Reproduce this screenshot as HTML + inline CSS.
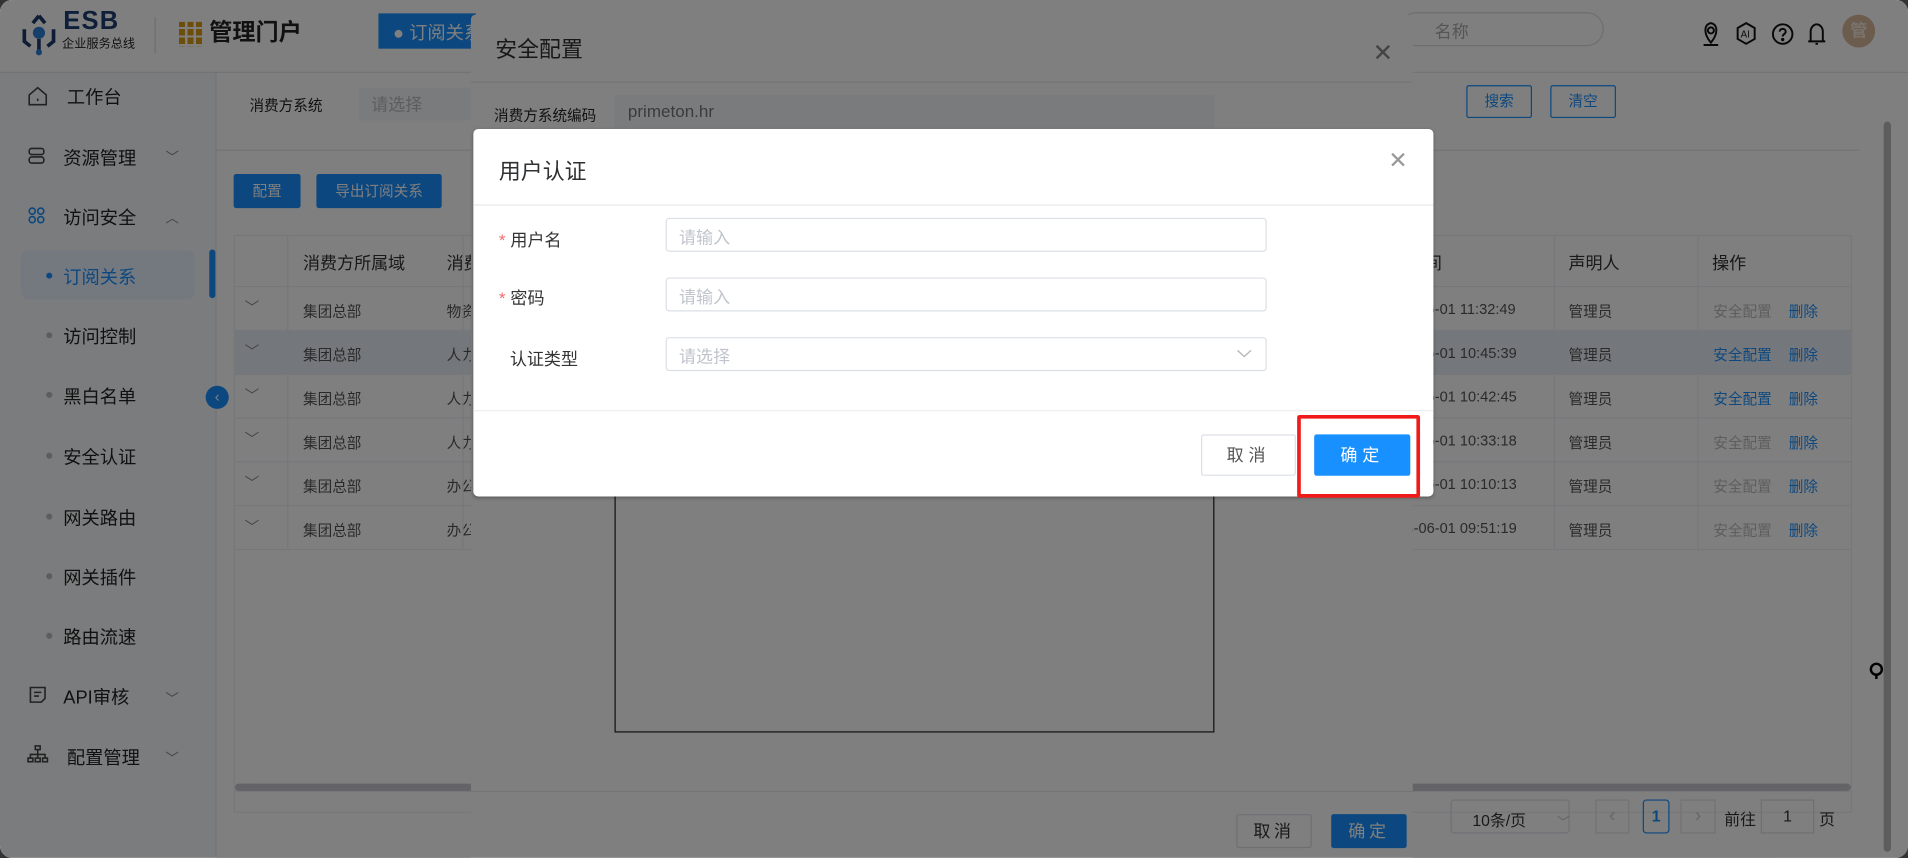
<!DOCTYPE html>
<html><head><meta charset="utf-8"><style>
*{box-sizing:border-box;margin:0;padding:0}
html,body{width:1908px;height:858px;overflow:hidden;background:#333}
#s{position:absolute;left:0;top:0;width:1568px;height:705px;transform:scale(1.21684);transform-origin:0 0;background:#fff;font-family:"Liberation Sans","Noto Sans CJK SC",sans-serif;color:#333;overflow:hidden;border-radius:10px}
.a{position:absolute;white-space:nowrap}
.hdr{left:0;top:0;width:1568px;height:60px;border-bottom:1px solid #e6e6e6;background:#fff}
.side{left:0;top:60px;width:178px;height:645px;background:#f7f8fa;border-right:1px solid #e8e8e8}
.mi{left:52px;font-size:15px;color:#222}
.dot{width:5px;height:5px;border-radius:50%;background:#bbb}
.btn{border-radius:2px;font-size:12px;text-align:center}
.tb{left:192px;top:193px;width:1330px;height:475px;border:1px solid #ebeef5}
.row{position:absolute;left:0;width:1328px;border-bottom:1px solid #ebeef5;font-size:12px;color:#555}
.vl{position:absolute;top:0;width:1px;background:#ebeef5}
.mask{left:0;top:0;width:1568px;height:705px;background:rgba(0,0,0,.5)}
.inp{border:1px solid #dcdfe6;border-radius:3px;height:28px;font-size:14px;color:#c0c4cc;padding:5px 10px}
.lbl{font-size:14px;color:#333}
.req{color:#f56c6c;margin-right:4px}
.chev{left:136px;font-size:11px;color:#888}
</style></head><body><div id="s">
<div class="a hdr"></div>
<svg class="a" style="left:15px;top:10px" width="34" height="36" viewBox="0 0 34 36"><circle cx="17" cy="17" r="5" fill="#2f7fd8"/><path d="M17 3 L12 9 M17 3 L22 9 M5 14 L5 24 L10 28 M29 14 L29 24 L24 28 M17 22 L17 33" stroke="#1d3b6b" stroke-width="3" fill="none"/><circle cx="17" cy="33" r="2.5" fill="#2f7fd8"/></svg>
<div class="a" style="left:52px;top:6px;font-size:21px;font-weight:bold;color:#1e3e73;letter-spacing:1px">ESB</div>
<div class="a" style="left:51px;top:27px;font-size:10px;color:#222">企业服务总线</div>
<div class="a" style="left:127px;top:14px;width:1px;height:30px;background:#ddd"></div>
<div class="a" style="left:147px;top:18px;width:20px;height:20px;background:repeating-linear-gradient(90deg,#d89a12 0 5px,transparent 5px 7px),#fff;"></div>
<div class="a" style="left:147px;top:18px;width:20px;height:20px;background:repeating-linear-gradient(0deg,#fff 0 2px,transparent 2px 7px)"></div>
<div class="a" style="left:172px;top:12px;font-size:19px;font-weight:bold;color:#222">管理门户</div>
<div class="a" style="left:311px;top:11px;width:80px;height:29px;background:#1890ff;color:#fff;font-size:15px;padding:5px 0 0 12px">● 订阅关系</div>
<div class="a" style="left:1150px;top:10px;width:168px;height:28px;border:1px solid #ddd;border-radius:14px;font-size:14px;color:#aaa;padding:5px 0 0 28px">名称</div>
<svg class="a" style="left:1396px;top:16px" width="110" height="24" viewBox="0 0 110 24" fill="none" stroke="#111" stroke-width="1.6"><path d="M10 19 C4 12 4 4 10 3 C16 4 16 12 10 19 Z M4 21 L16 21"/><circle cx="10" cy="9" r="2.5"/><path d="M39 3 L46 7 L46 16 L39 20 L32 16 L32 7 Z"/><text x="34.5" y="15" font-size="8" fill="#111" stroke="none" font-family="Liberation Sans">AI</text><circle cx="69" cy="12" r="8"/><path d="M66.5 10 C66.5 7 71.5 7 71.5 10 C71.5 12 69 12 69 14"/><circle cx="69" cy="16.5" r=".6" fill="#111"/><path d="M92 18 L92 10 C92 6 95 4 97 4 C99 4 102 6 102 10 L102 18 M90 18 L104 18 M96 20 L98 20"/></svg>
<div class="a" style="left:1514px;top:12px;width:27px;height:27px;border-radius:50%;background:#d9b99a;color:#f3e6da;font-size:14px;font-weight:bold;text-align:center;line-height:27px">管</div>
<div class="a side"></div>
<svg class="a" style="left:22px;top:70px" width="18" height="18" viewBox="0 0 18 18" fill="none" stroke="#444" stroke-width="1.3"><path d="M2 8 L9 2 L16 8 L16 16 L2 16 Z M9 11 L9 13"/></svg>
<div class="a mi" style="top:69px;left:55px">工作台</div>
<svg class="a" style="left:22px;top:120px" width="16" height="16" viewBox="0 0 16 16" fill="none" stroke="#444" stroke-width="1.3"><rect x="2" y="2" width="12" height="5" rx="2"/><rect x="2" y="9" width="12" height="5" rx="2"/></svg>
<div class="a mi" style="top:119px">资源管理</div><div class="a chev" style="top:121px">﹀</div>
<svg class="a" style="left:22px;top:169px" width="16" height="16" viewBox="0 0 16 16" fill="none" stroke="#1890ff" stroke-width="1.3"><circle cx="4.5" cy="4.5" r="2.5"/><circle cx="11.5" cy="4.5" r="2.5"/><circle cx="4.5" cy="11.5" r="2.5"/><circle cx="11.5" cy="11.5" r="2.5"/></svg>
<div class="a mi" style="top:168px">访问安全</div><div class="a chev" style="top:171px">︿</div>
<div class="a" style="left:17px;top:206px;width:143px;height:40px;background:#e8f2ff;border-radius:6px"></div>
<div class="a" style="left:172px;top:205px;width:5px;height:40px;background:#1890ff;border-radius:3px"></div>
<div class="a dot" style="left:38px;top:224px;background:#1890ff"></div><div class="a mi" style="top:217px;color:#1890ff">订阅关系</div>
<div class="a dot" style="left:38px;top:273px"></div><div class="a mi" style="top:266px">访问控制</div>
<div class="a dot" style="left:38px;top:322px"></div><div class="a mi" style="top:315px">黑白名单</div>
<div class="a dot" style="left:38px;top:372px"></div><div class="a mi" style="top:365px">安全认证</div>
<div class="a dot" style="left:38px;top:422px"></div><div class="a mi" style="top:415px">网关路由</div>
<div class="a dot" style="left:38px;top:471px"></div><div class="a mi" style="top:464px">网关插件</div>
<div class="a dot" style="left:38px;top:520px"></div><div class="a mi" style="top:513px">路由流速</div>
<svg class="a" style="left:23px;top:563px" width="16" height="16" viewBox="0 0 16 16" fill="none" stroke="#444" stroke-width="1.3"><path d="M2 2 H14 V11 L11 14 H2 Z M5 6 H11 M5 9 H9"/></svg>
<div class="a mi" style="top:562px">API审核</div><div class="a chev" style="top:566px">﹀</div>
<svg class="a" style="left:22px;top:612px" width="18" height="16" viewBox="0 0 18 16" fill="none" stroke="#444" stroke-width="1.3"><rect x="7" y="1" width="4" height="3"/><rect x="1" y="11" width="4" height="3"/><rect x="7" y="11" width="4" height="3"/><rect x="13" y="11" width="4" height="3"/><path d="M9 4 V8 M3 11 V8 H15 V11 M9 8 V11"/></svg>
<div class="a mi" style="top:612px;left:55px">配置管理</div><div class="a chev" style="top:615px">﹀</div>
<div class="a" style="left:169px;top:317px;width:19px;height:19px;border-radius:50%;background:#1890ff;color:#fff;font-size:12px;text-align:center;line-height:18px">‹</div>
<div class="a" style="left:205px;top:78px;font-size:12px;color:#222">消费方系统</div>
<div class="a" style="left:295px;top:72px;width:100px;height:27px;background:#f5f7fa;font-size:14px;color:#bbb;padding:4px 10px">请选择</div>
<div class="a btn" style="left:1205px;top:70px;width:54px;height:27px;border:1px solid #1890ff;color:#1890ff;line-height:25px">搜索</div>
<div class="a btn" style="left:1274px;top:70px;width:54px;height:27px;border:1px solid #1890ff;color:#1890ff;line-height:25px">清空</div>
<div class="a" style="left:178px;top:123px;width:1350px;height:1px;background:#e6e6e6"></div>
<div class="a btn" style="left:192px;top:143px;width:55px;height:28px;background:#1890ff;color:#fff;line-height:28px">配置</div>
<div class="a btn" style="left:260px;top:143px;width:103px;height:28px;background:#1890ff;color:#fff;line-height:28px">导出订阅关系</div>
<div class="a tb">
 <div class="row" style="top:0;height:42px;font-size:14px;color:#333"><span class="a" style="left:56px;top:12px">消费方所属域</span><span class="a" style="left:174px;top:12px">消费</span><span class="a" style="left:936px;top:12px">创建时间</span><span class="a" style="left:1096px;top:12px">声明人</span><span class="a" style="left:1214px;top:12px">操作</span></div>
 <div class="row" style="top:42px;height:36px"><span class="a" style="left:8px;top:8px;color:#888">﹀</span><span class="a" style="left:56px;top:11px">集团总部</span><span class="a" style="left:174px;top:11px">物资</span><span class="a" style="left:942px;top:11px">2023-06-01 11:32:49</span><span class="a" style="left:1096px;top:11px">管理员</span><span class="a" style="left:1215px;top:11px;color:#bbb">安全配置</span><span class="a" style="left:1277px;top:11px;color:#1890ff">删除</span></div>
 <div class="row" style="top:78px;height:36px;background:#e9eef6"><span class="a" style="left:8px;top:8px;color:#888">﹀</span><span class="a" style="left:56px;top:11px">集团总部</span><span class="a" style="left:174px;top:11px">人力</span><span class="a" style="left:942px;top:11px">2023-06-01 10:45:39</span><span class="a" style="left:1096px;top:11px">管理员</span><span class="a" style="left:1215px;top:11px;color:#1890ff">安全配置</span><span class="a" style="left:1277px;top:11px;color:#1890ff">删除</span></div>
 <div class="row" style="top:114px;height:36px"><span class="a" style="left:8px;top:8px;color:#888">﹀</span><span class="a" style="left:56px;top:11px">集团总部</span><span class="a" style="left:174px;top:11px">人力</span><span class="a" style="left:942px;top:11px">2023-06-01 10:42:45</span><span class="a" style="left:1096px;top:11px">管理员</span><span class="a" style="left:1215px;top:11px;color:#1890ff">安全配置</span><span class="a" style="left:1277px;top:11px;color:#1890ff">删除</span></div>
 <div class="row" style="top:150px;height:36px"><span class="a" style="left:8px;top:8px;color:#888">﹀</span><span class="a" style="left:56px;top:11px">集团总部</span><span class="a" style="left:174px;top:11px">人力</span><span class="a" style="left:942px;top:11px">2023-06-01 10:33:18</span><span class="a" style="left:1096px;top:11px">管理员</span><span class="a" style="left:1215px;top:11px;color:#bbb">安全配置</span><span class="a" style="left:1277px;top:11px;color:#1890ff">删除</span></div>
 <div class="row" style="top:186px;height:36px"><span class="a" style="left:8px;top:8px;color:#888">﹀</span><span class="a" style="left:56px;top:11px">集团总部</span><span class="a" style="left:174px;top:11px">办公</span><span class="a" style="left:942px;top:11px">2023-06-01 10:10:13</span><span class="a" style="left:1096px;top:11px">管理员</span><span class="a" style="left:1215px;top:11px;color:#bbb">安全配置</span><span class="a" style="left:1277px;top:11px;color:#1890ff">删除</span></div>
 <div class="row" style="top:222px;height:36px"><span class="a" style="left:8px;top:8px;color:#888">﹀</span><span class="a" style="left:56px;top:11px">集团总部</span><span class="a" style="left:174px;top:11px">办公</span><span class="a" style="left:942px;top:11px">2023-06-01 09:51:19</span><span class="a" style="left:1096px;top:11px">管理员</span><span class="a" style="left:1215px;top:11px;color:#bbb">安全配置</span><span class="a" style="left:1277px;top:11px;color:#1890ff">删除</span></div>
 <div class="vl" style="left:43px;height:258px"></div><div class="vl" style="left:187px;height:258px"></div><div class="vl" style="left:1084px;height:258px"></div><div class="vl" style="left:1202px;height:258px"></div>
 <div class="a" style="left:0;top:450px;width:1328px;height:6px;background:#c8c8cc;border-radius:3px"></div>
 <div class="a" style="left:0;top:456px;width:1328px;height:1px;background:#ebeef5"></div>
</div>
<div class="a" style="left:1192px;top:657px;width:98px;height:28px;border:1px solid #dcdfe6;border-radius:3px;font-size:13px;color:#333;padding:6px 0 0 17px">10条/页 <span style="color:#bbb;margin-left:22px;font-size:10px">﹀</span></div>
<div class="a" style="left:1311px;top:657px;width:28px;height:28px;border:1px solid #e4e4e4;color:#ccc;text-align:center;line-height:26px">‹</div>
<div class="a" style="left:1350px;top:657px;width:22px;height:28px;border:1px solid #1890ff;border-radius:3px;color:#1890ff;font-weight:bold;text-align:center;line-height:26px;font-size:13px">1</div>
<div class="a" style="left:1381px;top:657px;width:29px;height:28px;border:1px solid #e4e4e4;color:#ccc;text-align:center;line-height:26px">›</div>
<div class="a" style="left:1417px;top:663px;font-size:13px">前往</div>
<div class="a" style="left:1447px;top:657px;width:44px;height:28px;border:1px solid #dcdfe6;font-size:13px;text-align:center;line-height:26px">1</div>
<div class="a" style="left:1495px;top:663px;font-size:13px">页</div>
<div class="a" style="left:1548px;top:100px;width:6px;height:600px;background:#bbb;border-radius:3px"></div>
<svg class="a" style="left:1535px;top:543px" width="14" height="18" viewBox="0 0 14 18" fill="none" stroke="#000" stroke-width="2"><circle cx="7" cy="7" r="4.5"/><path d="M7 11.5 V15"/></svg>
<div class="a" style="left:387px;top:12px;width:774px;height:700px;background:#fff;border-radius:4px"></div>
<div class="a" style="left:407px;top:27px;font-size:18px;color:#303133">安全配置</div>
<div class="a" style="left:1128px;top:31px;font-size:20px;color:#888">✕</div>
<div class="a" style="left:387px;top:67px;width:774px;height:1px;background:#e8e8e8"></div>
<div class="a" style="left:406px;top:86px;font-size:12px;color:#222">消费方系统编码</div>
<div class="a" style="left:505px;top:78px;width:493px;height:27px;background:#f5f7fa;font-size:14px;color:#777;padding:5px 11px">primeton.hr</div>
<div class="a" style="left:505px;top:380px;width:493px;height:222px;border:1px solid #222"></div>
<div class="a" style="left:387px;top:650px;width:774px;height:1px;background:#e8e8e8"></div>
<div class="a btn" style="left:1016px;top:669px;width:62px;height:28px;border:1px solid #dcdfe6;font-size:14px;line-height:26px;letter-spacing:3px">取消</div>
<div class="a btn" style="left:1094px;top:669px;width:62px;height:28px;background:#1890ff;color:#fff;font-size:14px;line-height:28px;letter-spacing:3px">确定</div>
<div class="a mask"></div>
<div class="a" style="left:389px;top:106px;width:789px;height:302px;background:#fff;border-radius:4px;box-shadow:0 1px 3px rgba(0,0,0,.3)"></div>
<div class="a" style="left:410px;top:127px;font-size:18px;color:#303133">用户认证</div>
<div class="a" style="left:1141px;top:121px;font-size:19px;color:#999">✕</div>
<div class="a" style="left:389px;top:168px;width:789px;height:1px;background:#e8e8e8"></div>
<div class="a lbl" style="left:410px;top:187px"><span class="req">*</span>用户名</div>
<div class="a inp" style="left:547px;top:179px;width:494px">请输入</div>
<div class="a lbl" style="left:410px;top:235px"><span class="req">*</span>密码</div>
<div class="a inp" style="left:547px;top:228px;width:494px">请输入</div>
<div class="a lbl" style="left:419px;top:285px">认证类型</div>
<div class="a inp" style="left:547px;top:277px;width:494px">请选择</div>
<svg class="a" style="left:1016px;top:286px" width="13" height="9" viewBox="0 0 13 9" fill="none" stroke="#bbb" stroke-width="1.2"><path d="M1 2 L6.5 7 L12 2"/></svg>
<div class="a" style="left:389px;top:337px;width:789px;height:1px;background:#eee"></div>
<div class="a btn" style="left:987px;top:357px;width:78px;height:34px;border:1px solid #dcdfe6;font-size:14px;line-height:32px;letter-spacing:4px;color:#555">取消</div>
<div class="a btn" style="left:1080px;top:357px;width:79px;height:34px;background:#1890ff;color:#fff;font-size:14px;line-height:34px;letter-spacing:4px">确定</div>
<div class="a" style="left:1066px;top:341px;width:101px;height:68px;border:3px solid #f01a1a;border-radius:2px"></div>
</div></body></html>
